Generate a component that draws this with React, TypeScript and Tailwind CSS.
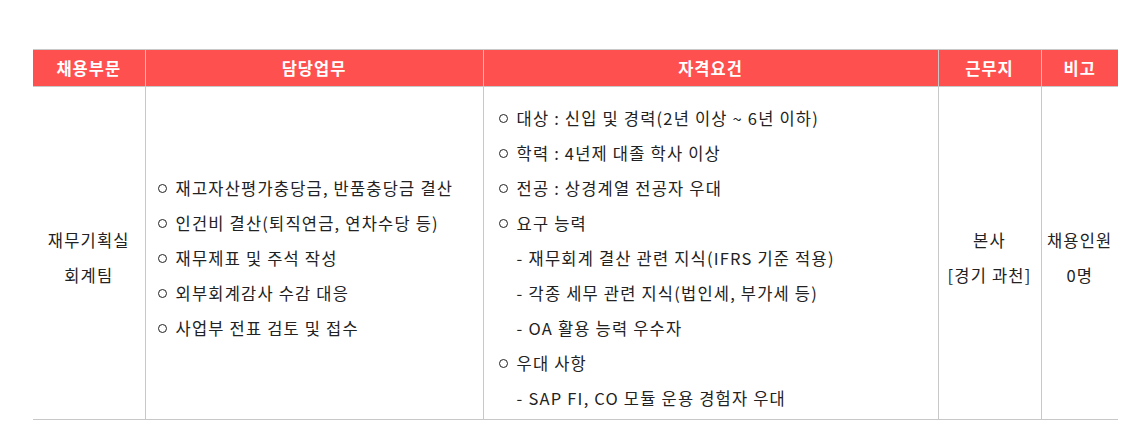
import React from "react";

const duties = [
  "재고자산평가충당금, 반품충당금 결산",
  "인건비 결산(퇴직연금, 연차수당 등)",
  "재무제표 및 주석 작성",
  "외부회계감사 수감 대응",
  "사업부 전표 검토 및 접수",
];

type Req = { text: string; sub?: boolean };

const requirements: Req[] = [
  { text: "대상 : 신입 및 경력(2년 이상 ~ 6년 이하)" },
  { text: "학력 : 4년제 대졸 학사 이상" },
  { text: "전공 : 상경계열 전공자 우대" },
  { text: "요구 능력" },
  { text: "재무회계 결산 관련 지식(IFRS 기준 적용)", sub: true },
  { text: "각종 세무 관련 지식(법인세, 부가세 등)", sub: true },
  { text: "OA 활용 능력 우수자", sub: true },
  { text: "우대 사항" },
  { text: "SAP FI, CO 모듈 운용 경험자 우대", sub: true },
];

const Bullet = ({ children }: { children: React.ReactNode }) => (
  <div className="flex items-center">
    <span className="w-[19px] shrink-0 pl-[1px]">
      <span className="block w-[9px] h-[9px] rounded-full border-[1.5px] border-[#222]" />
    </span>
    <span>{children}</span>
  </div>
);

const SubItem = ({ children }: { children: React.ReactNode }) => (
  <div className="flex pl-[19px]">
    <span className="w-[12px] shrink-0">-</span>
    <span>{children}</span>
  </div>
);

export default function App() {
  const th =
    "bg-[#ff5050] text-white font-bold text-[16.5px] tracking-[1px] h-[37px] border-x border-[#c8c8c8] first:border-l-0 last:border-r-0 text-center align-middle p-0";
  const td =
    "border-x border-[#c8c8c8] first:border-l-0 last:border-r-0 align-middle pt-[10px] pb-0";

  return (
    <div
      className="w-[1140px] h-[440px] bg-white pt-[49px] pl-[33px] text-[#222] text-[16.5px] tracking-[1.2px] leading-[35px]"
      style={{ fontFamily: '"Malgun Gothic", "Noto Sans CJK KR", sans-serif' }}
    >
      <table className="w-[1085px] border-collapse table-fixed border-t border-b border-[#c8c8c8]">
        <colgroup>
          <col className="w-[112px]" />
          <col className="w-[338px]" />
          <col className="w-[455px]" />
          <col className="w-[103px]" />
          <col className="w-[77px]" />
        </colgroup>
        <thead>
          <tr className="border-b border-[#c8c8c8]">
            <th className={th}>채용부문</th>
            <th className={th}>담당업무</th>
            <th className={th}>자격요건</th>
            <th className={th}>근무지</th>
            <th className={th}>비고</th>
          </tr>
        </thead>
        <tbody>
          <tr className="h-[333px]">
            <td className={`${td} text-center`}>
              재무기획실
              <br />
              회계팀
            </td>
            <td className={`${td} pl-[11px]`}>
              {duties.map((d) => (
                <Bullet key={d}>{d}</Bullet>
              ))}
            </td>
            <td className={`${td} pl-[14px]`}>
              {requirements.map((r) =>
                r.sub ? (
                  <SubItem key={r.text}>{r.text}</SubItem>
                ) : (
                  <Bullet key={r.text}>{r.text}</Bullet>
                )
              )}
            </td>
            <td className={`${td} text-center`}>
              본사
              <br />
              [경기 과천]
            </td>
            <td className={`${td} text-center`}>
              채용인원
              <br />
              0명
            </td>
          </tr>
        </tbody>
      </table>
    </div>
  );
}
